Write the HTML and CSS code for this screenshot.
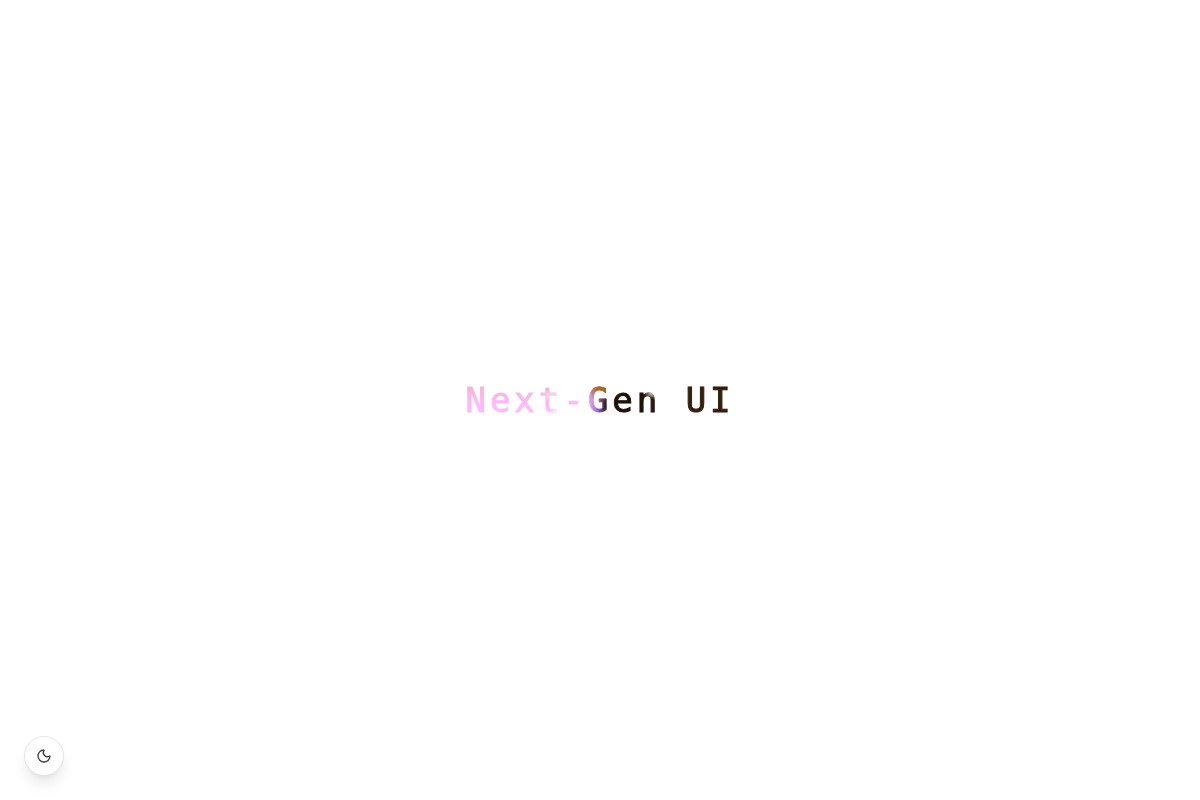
FILE: index.html
```
<!DOCTYPE html>
<html lang="en">
<head>
    <meta charset="UTF-8">
    <meta name="viewport" content="width=device-width, initial-scale=1.0">
    <title>Next-Gen UI</title>
    <link rel="stylesheet" href="styles.css">
</head>
<body>
    <main class="hero">
        <h1 class="hero-title">Next-Gen UI</h1>
    </main>

    <button class="theme-toggle" type="button" aria-label="Toggle theme">
        <svg width="16" height="16" viewBox="0 0 24 24" fill="none" stroke="currentColor" stroke-width="2" stroke-linecap="round" stroke-linejoin="round" aria-hidden="true">
            <path d="M20.985 12.486a9 9 0 1 1-9.473-9.472c.405-.022.617.46.402.803a6 6 0 0 0 8.268 8.268c.344-.215.825-.004.803.401"/>
        </svg>
    </button>
</body>
</html>
```
FILE: styles.css
```
* {
    box-sizing: border-box;
}
body {
    margin: 0;
    background: #fff;
}
.hero {
    display: flex;
    align-items: center;
    justify-content: center;
    min-height: 100vh;
}
.hero-title {
    margin: 0;
    font-family: "DejaVu Sans Mono", monospace;
    font-size: 34px;
    font-weight: 400;
    line-height: 40px;
    letter-spacing: 4px;
    color: transparent;
    -webkit-text-stroke: 1px transparent;
    background:
        radial-gradient(ellipse 8px 6px at 187px 13px, #e0ddd0, transparent),
        radial-gradient(ellipse 8px 10px at 92px 32px, rgba(255, 255, 255, 0.8), transparent),
        radial-gradient(ellipse 14px 6px at 88px 16px, rgba(240, 235, 225, 0.8), transparent),
        radial-gradient(ellipse 20px 18px at 140px 4px, #b86c04 40%, rgba(200, 130, 30, 0)),
        linear-gradient(90deg, rgba(154, 112, 208, 0) 122px, #9a70d0 132px, #1a1408 142px, #181004 170px, #30220a 200px),
        linear-gradient(#f6b4d8 8px, #ffbaff 26px);
    -webkit-background-clip: text;
    background-clip: text;
}
.theme-toggle {
    position: fixed;
    left: 24px;
    bottom: 24px;
    display: flex;
    align-items: center;
    justify-content: center;
    width: 40px;
    height: 40px;
    padding: 0;
    border: 1px solid #e5e5e8;
    border-radius: 50%;
    background: #fff;
    color: #3f3f46;
    box-shadow: 0 10px 15px -3px rgba(0, 0, 0, 0.1), 0 4px 6px -4px rgba(0, 0, 0, 0.1);
    cursor: pointer;
}
```
